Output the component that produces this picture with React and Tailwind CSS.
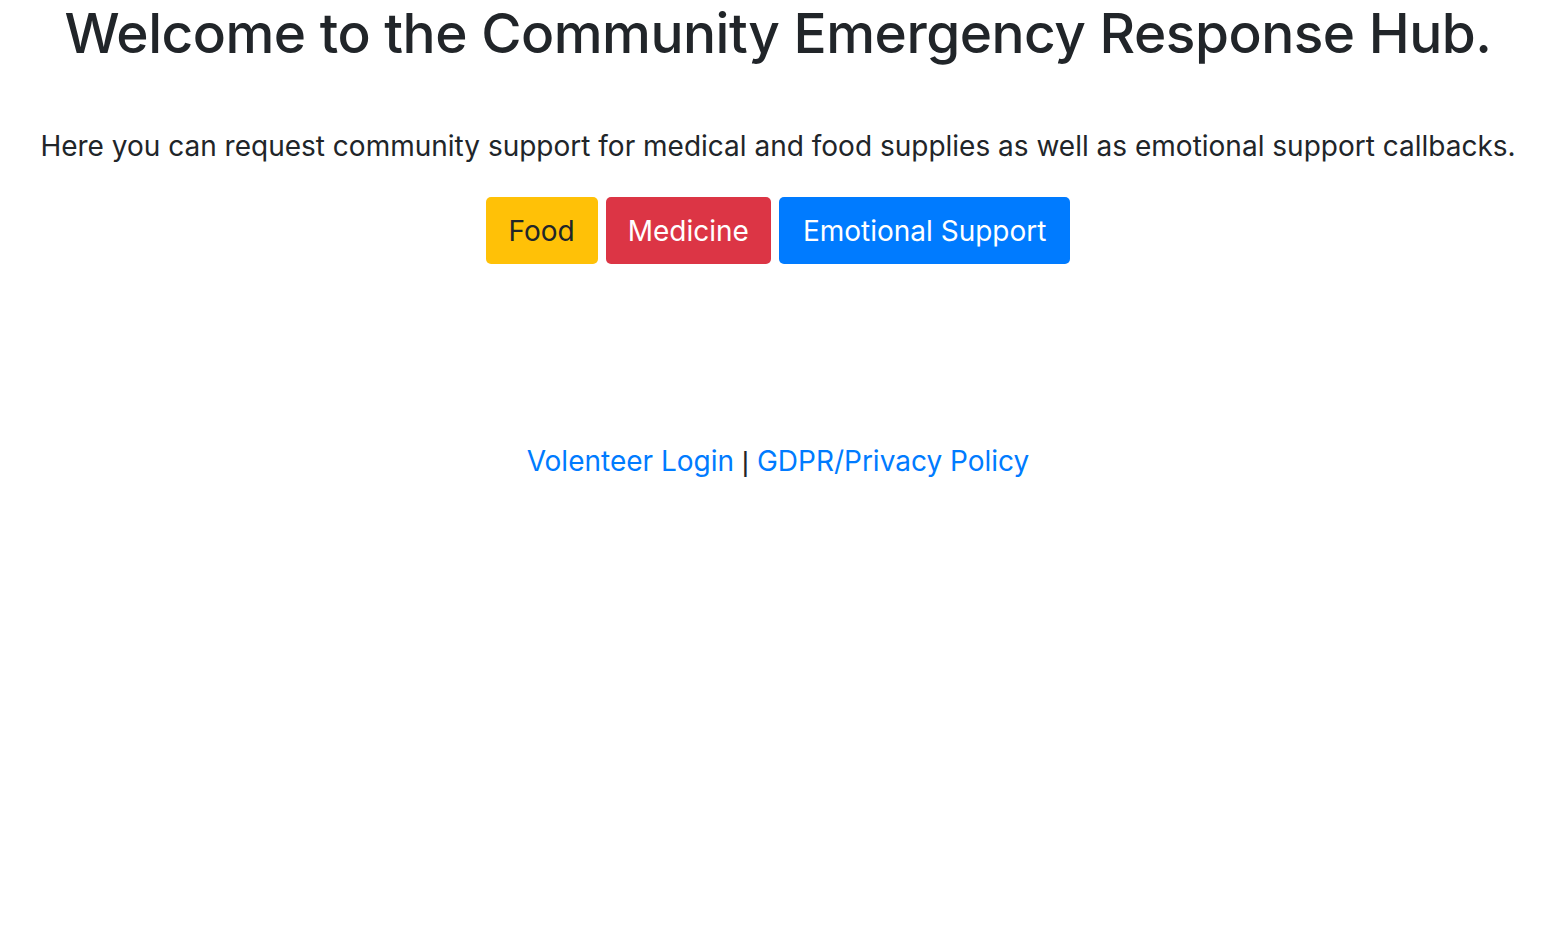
export default function App() {
  const font = { fontFamily: "Inter, 'Liberation Sans', sans-serif" };

  return (
    <div className="min-h-screen bg-white text-[#212529]" style={font}>
      <div className="flex flex-col items-center pr-2 text-center">
        <h1 className="text-[55px] leading-[1.2] font-medium tracking-[-0.5px]">
          Welcome to the Community Emergency Response Hub.
        </h1>

        <p className="mt-[59px] text-[28px] leading-[1.5]">
          Here you can request community support for medical and food supplies as well as emotional support callbacks.
        </p>

        <div className="mt-[30px] flex gap-2">
          <button className="h-[67px] rounded-[5px] bg-[#ffc107] px-[23px] text-[28px] text-[#212529]">Food</button>
          <button className="h-[67px] rounded-[5px] bg-[#dc3545] px-[22px] text-[28px] text-white">Medicine</button>
          <button className="h-[67px] rounded-[5px] bg-[#007bff] px-[24px] text-[28px] text-white">Emotional Support</button>
        </div>

        <div className="mt-[176px] text-[28px] leading-[1.5]">
          <a href="#" className="text-[#007bff]">Volenteer Login</a>
          <span style={{ fontFamily: "'Liberation Sans', sans-serif" }}> | </span>
          <a href="#" className="text-[#007bff]">GDPR/Privacy Policy</a>
        </div>
      </div>
    </div>
  );
}
